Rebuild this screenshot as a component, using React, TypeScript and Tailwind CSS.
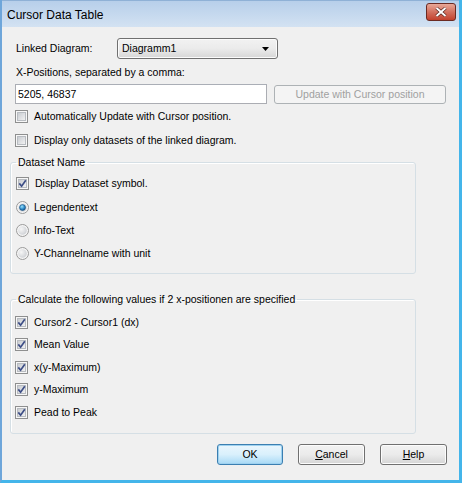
import React from 'react';

const font = { fontFamily: '"Liberation Sans", Arial, sans-serif' };

function CheckBox({ checked }: { checked?: boolean }) {
  return (
    <svg width="13" height="13" viewBox="0 0 13 13" className="shrink-0">
      <defs>
        <linearGradient id="cbfill" x1="0" y1="0" x2="1" y2="1">
          <stop offset="0" stopColor="#c6cacf" />
          <stop offset="1" stopColor="#f4f4f4" />
        </linearGradient>
      </defs>
      <rect x="0.5" y="0.5" width="12" height="12" fill="#f7f7f7" stroke="#8e8f8f" />
      <rect x="2.5" y="2.5" width="8" height="8" fill="url(#cbfill)" stroke="#b8bcc1" />
      {checked && (
        <path d="M3.3 6.4 L5.6 9.2 L9.8 3.2" stroke="#3d4e86" strokeWidth="1.7" fill="none" />
      )}
    </svg>
  );
}

function Radio({ checked }: { checked?: boolean }) {
  return (
    <svg width="13" height="13" viewBox="0 0 13 13" className="shrink-0">
      <defs>
        <radialGradient id="rbfill" cx="0.35" cy="0.35" r="0.8">
          <stop offset="0" stopColor="#f6f6f6" />
          <stop offset="1" stopColor="#c9ccd1" />
        </radialGradient>
        <radialGradient id="rbdot" cx="0.4" cy="0.35" r="0.7">
          <stop offset="0" stopColor="#9be2fb" />
          <stop offset="0.6" stopColor="#2d8ac9" />
          <stop offset="1" stopColor="#0d4f86" />
        </radialGradient>
      </defs>
      <circle cx="6.5" cy="6.5" r="6" fill="#f5f5f5" stroke="#9a9a9a" />
      <circle cx="6.5" cy="6.5" r="4.3" fill="url(#rbfill)" />
      {checked && <circle cx="6.5" cy="6.5" r="3" fill="url(#rbdot)" stroke="#1b4f7d" strokeWidth="0.6" />}
    </svg>
  );
}

function CheckRow({ label, checked, className = '' }: { label: string; checked?: boolean; className?: string }) {
  return (
    <div className={`flex items-center h-[13px] gap-[6px] ${className}`}>
      <CheckBox checked={checked} />
      <span className="leading-[13px]">{label}</span>
    </div>
  );
}

function RadioRow({ label, checked, className = '' }: { label: string; checked?: boolean; className?: string }) {
  return (
    <div className={`flex items-center h-[13px] gap-[5px] ${className}`}>
      <Radio checked={checked} />
      <span className="leading-[13px]">{label}</span>
    </div>
  );
}

function DlgButton({ children, primary }: { children: React.ReactNode; primary?: boolean }) {
  return (
    <button
      className={`h-[21px] rounded-[3px] border text-[10.5px] leading-[13px] text-black ${
        primary
          ? 'border-[#3c7fb1] bg-gradient-to-b from-[#eaf6fd] via-[#d9f0fc] to-[#a7d9f5] shadow-[inset_0_0_0_1px_#9fd2f0]'
          : 'border-[#707070] bg-gradient-to-b from-[#f2f2f2] via-[#ebebeb] to-[#d5d5d5] shadow-[inset_0_0_0_1px_#fcfcfc]'
      }`}
      style={{ ...font, width: primary ? 66 : 67 }}
    >
      {children}
    </button>
  );
}

export default function App() {
  return (
    <div className="w-[462px] h-[483px] flex flex-col bg-[#0f2a3e] overflow-hidden" style={font}>
      <div className="flex-1 flex flex-col border-l-2 border-l-[#6ea6da] border-r-[3px] border-r-[#44b5ea] border-b-[3px] border-b-[#44b5ea] bg-[#f0f0f0]">
        {/* title bar */}
        <div className="h-[27px] flex items-center justify-between pl-[5px] pr-[3px] bg-gradient-to-b from-[#b7cfea] to-[#d3e2f2] border-t border-[#8fb1d6]">
          <span className="text-[12px] text-black leading-[14px] mt-px">Cursor Data Table</span>
          <div className="w-[30px] h-[18px] mb-[4px] rounded-[3px] border border-[#6b2a22] bg-gradient-to-b from-[#e8a898] via-[#d2705f] to-[#c2402c] flex items-center justify-center">
            <svg width="12" height="10" viewBox="0 0 12 10">
              <path d="M1.5 1 L10.5 9 M10.5 1 L1.5 9" stroke="#4a1b15" strokeWidth="3.2" />
              <path d="M1.5 1 L10.5 9 M10.5 1 L1.5 9" stroke="#ffffff" strokeWidth="2" />
            </svg>
          </div>
        </div>

        <div className="flex flex-col text-[10.5px] text-black">
          {/* linked diagram */}
          <div className="flex items-center mt-[11px] pl-[14px]">
            <span className="w-[101px] leading-[13px]">Linked Diagram:</span>
            <div className="w-[161px] h-[21px] rounded-[3px] border border-[#707070] bg-gradient-to-b from-[#f2f2f2] via-[#ebebeb] to-[#d6d6d6] shadow-[inset_0_0_0_1px_#fbfbfb] flex items-center justify-between pl-[4px] pr-[8px]">
              <span className="leading-[13px]">Diagramm1</span>
              <svg width="7" height="4" viewBox="0 0 7 4">
                <path d="M0 0 H7 L3.5 4 Z" fill="#000" />
              </svg>
            </div>
          </div>

          <div className="mt-[7px] pl-[14px] leading-[13px]">X-Positions, separated by a comma:</div>

          <div className="flex items-start mt-[5px] pl-[13px]">
            <div className="w-[252px] h-[20px] border border-[#abadb3] border-t-[#aaaeb6] bg-white flex items-center pl-[2px]">
              <span className="leading-[13px]">5205, 46837</span>
            </div>
            <div className="ml-[7px] mt-px w-[172px] h-[19px] rounded-[3px] border border-[#adb2b5] bg-[#f4f4f4] flex items-center justify-center text-[#a0a0a0]">
              Update with Cursor position
            </div>
          </div>

          <CheckRow label="Automatically Update with Cursor position." className="mt-[6px] pl-[13px]" />
          <CheckRow label="Display only datasets of the linked diagram." className="mt-[11px] pl-[13px]" />

          {/* Dataset Name */}
          <fieldset className="mt-[9px] ml-[8px] w-[406px] rounded-[3px] border border-[#d5dfe5] shadow-[inset_1px_1px_0_#ffffff] pl-[5px] pb-[13px]">
            <legend className="px-[2px] leading-[13px]">Dataset Name</legend>
            <CheckRow label="Display Dataset symbol." checked className="mt-[8px]" />
            <RadioRow label="Legendentext" checked className="mt-[11px]" />
            <RadioRow label="Info-Text" className="mt-[10px]" />
            <RadioRow label="Y-Channelname with unit" className="mt-[10px]" />
          </fieldset>

          {/* calculated values */}
          <fieldset className="mt-[19px] ml-[8px] w-[406px] rounded-[3px] border border-[#d5dfe5] shadow-[inset_1px_1px_0_#ffffff] pl-[4px] pb-[14px]">
            <legend className="ml-px px-[2px] leading-[13px]">Calculate the following values if 2 x-positionen are specified</legend>
            <CheckRow label="Cursor2 - Cursor1 (dx)" checked className="mt-[10px]" />
            <CheckRow label="Mean Value" checked className="mt-[9px]" />
            <CheckRow label="x(y-Maximum)" checked className="mt-[10px]" />
            <CheckRow label="y-Maximum" checked className="mt-[9px]" />
            <CheckRow label="Pead to Peak" checked className="mt-[10px]" />
          </fieldset>

          {/* buttons */}
          <div className="flex mt-[10px] pl-[215px] gap-[15px]">
            <DlgButton primary>OK</DlgButton>
            <DlgButton>
              <span className="underline underline-offset-[1px]">C</span>ancel
            </DlgButton>
            <DlgButton>
              <span className="underline underline-offset-[1px]">H</span>elp
            </DlgButton>
          </div>
        </div>
      </div>
    </div>
  );
}
